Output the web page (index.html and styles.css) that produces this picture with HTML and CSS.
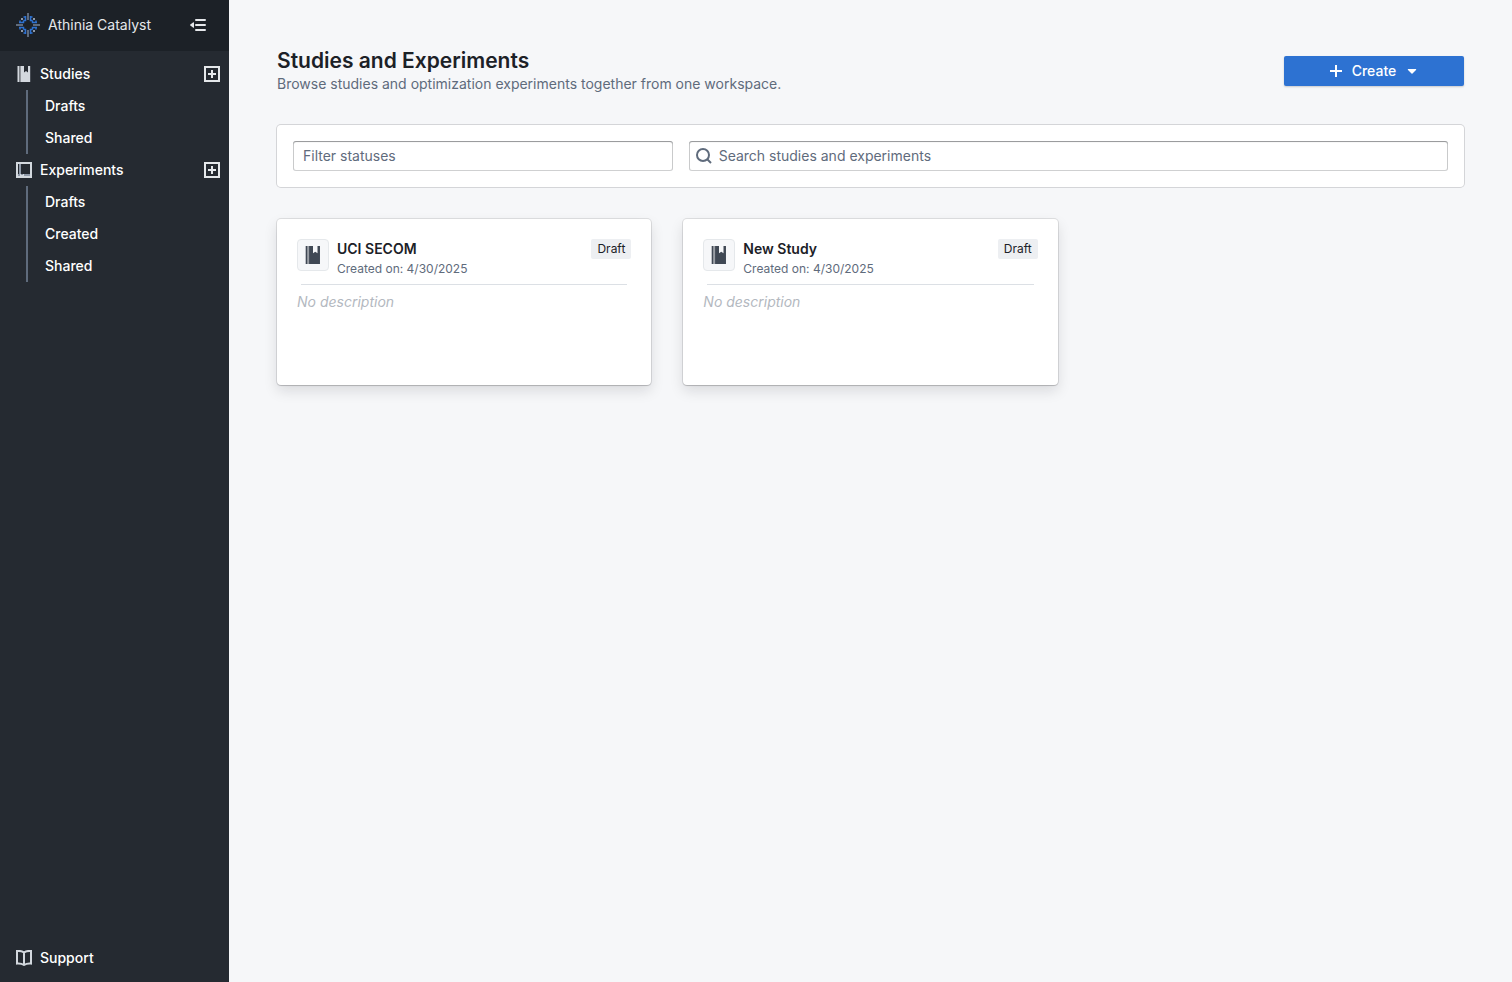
FILE: index.html
```
<!DOCTYPE html>
<html lang="en">
<head>
    <meta charset="UTF-8">
    <meta name="viewport" content="width=device-width, initial-scale=1.0">
    <title>Athinia Catalyst</title>
    <link rel="stylesheet" href="styles.css">
</head>
<body>
    <!-- Shared icon shapes -->
    <svg class="sprite" aria-hidden="true">
        <symbol id="icon-study" viewBox="0 0 16 16">
            <path d="M1.500 0H3v16H1.500zM4.500 0H8v6.500L10 5l2 1.500V0h2.200v16H4.500z"/>
            <path d="M3 0h1.500v16H3z" opacity=".5"/>
        </symbol>
        <symbol id="icon-add" viewBox="0 0 16 16">
            <path fill-rule="evenodd" d="M0 0h16v16H0zM2 2v12h12V2zM7 4h2v3h3v2H9v3H7V9H4V7h3z"/>
        </symbol>
    </svg>

    <div class="app">
        <aside class="sidebar">
            <div class="sidebar-header">
                <svg class="logo" viewBox="-12 -12 24 24" aria-hidden="true">
                    <g id="logo-quarter">
                        <path class="logo-blue" d="M-2.500 -9V-4.500H-4.500M-9 -2.500H-4.500V-4.500M-8 -4.500V-2.500M-4.500 -8H-2.500"/>
                        <path class="logo-grey" d="M-7 -6h2"/>
                    </g>
                    <use href="#logo-quarter" transform="scale(-1 1)"/>
                    <use href="#logo-quarter" transform="scale(1 -1)"/>
                    <use href="#logo-quarter" transform="scale(-1 -1)"/>
                    <path class="logo-arm" d="M0 -12v7M0 12v-7M-12 0h7M12 0h-7"/>
                </svg>
                <span class="brand">Athinia Catalyst</span>
                <button type="button" class="icon-button collapse" aria-label="Collapse sidebar">
                    <svg class="icon" viewBox="0 0 16 16" aria-hidden="true"><path d="M6 2h9q1 0 1 1t-1 1H6Q5 4 5 3t1-1zM6 7h9q1 0 1 1t-1 1H6Q5 9 5 8t1-1zM6 12h9q1 0 1 1t-1 1H6q-1 0-1-1t1-1zM4 5.500v5q-.5.5-1 0L.3 8.500q-.5-.5 0-1L3 5.500q.5-.5 1 0z"/></svg>
                </button>
            </div>

            <nav class="nav">
                <div class="nav-row">
                    <a href="#" class="nav-link"><svg class="icon" aria-hidden="true"><use href="#icon-study"/></svg>Studies</a>
                    <button type="button" class="icon-button" aria-label="Add study"><svg class="icon" aria-hidden="true"><use href="#icon-add"/></svg></button>
                </div>
                <div class="nav-children">
                    <a href="#" class="nav-child">Drafts</a>
                    <a href="#" class="nav-child">Shared</a>
                </div>
                <div class="nav-row">
                    <a href="#" class="nav-link">
                        <svg class="icon" viewBox="0 0 16 16" aria-hidden="true">
                            <path fill-rule="evenodd" d="M0 0h16v16H0zM2 2v12h12V2z"/>
                            <path d="M3 2h2v10H3zM2 12h12v2H2z" class="icon-shade"/>
                            <path d="M4 12h1v1h2v-1h1v4H4z"/>
                        </svg>Experiments
                    </a>
                    <button type="button" class="icon-button" aria-label="Add experiment"><svg class="icon" aria-hidden="true"><use href="#icon-add"/></svg></button>
                </div>
                <div class="nav-children">
                    <a href="#" class="nav-child">Drafts</a>
                    <a href="#" class="nav-child">Created</a>
                    <a href="#" class="nav-child">Shared</a>
                </div>
            </nav>

            <div class="nav-row support">
                <a href="#" class="nav-link">
                    <svg class="icon icon-line" viewBox="0 0 16 16" aria-hidden="true"><path d="M8 2.500Q5 .5 1 1v12.500q4-.5 7 1.500 3-2 7-1.500V1Q11 .5 8 2.500V15"/></svg>Support
                </a>
            </div>
        </aside>

        <main class="main">
            <header class="page-header">
                <div>
                    <h1 class="title">Studies and Experiments</h1>
                    <p class="subtitle">Browse studies and optimization experiments together from one workspace.</p>
                </div>
                <button type="button" class="create">
                    <svg class="icon" viewBox="0 0 16 16" aria-hidden="true"><path d="M7 2h2v5h5v2H9v5H7V9H2V7h5z"/></svg>
                    Create
                    <svg class="icon" viewBox="0 0 16 16" aria-hidden="true"><path d="M4 6h8q.5.5 0 1L8.500 10.500q-.5.500-1 0L4 7q-.5-.5 0-1z"/></svg>
                </button>
            </header>

            <form class="filters">
                <input type="text" class="input" placeholder="Filter statuses" aria-label="Filter statuses">
                <div class="search">
                    <svg class="icon search-icon" viewBox="0 0 16 16" aria-hidden="true"><circle cx="7" cy="7" r="6"/><path d="M11.500 11.500L15 15"/></svg>
                    <input type="search" class="input" placeholder="Search studies and experiments" aria-label="Search studies and experiments">
                </div>
            </form>

            <section class="cards">
                <article class="card">
                    <div class="card-header">
                        <span class="card-icon"><svg aria-hidden="true"><use href="#icon-study"/></svg></span>
                        <div class="card-text">
                            <h2 class="card-title">UCI SECOM</h2>
                            <p class="card-date">Created on: 4/30/2025</p>
                        </div>
                        <span class="tag">Draft</span>
                    </div>
                    <hr class="divider">
                    <p class="description">No description</p>
                </article>
                <article class="card">
                    <div class="card-header">
                        <span class="card-icon"><svg aria-hidden="true"><use href="#icon-study"/></svg></span>
                        <div class="card-text">
                            <h2 class="card-title">New Study</h2>
                            <p class="card-date">Created on: 4/30/2025</p>
                        </div>
                        <span class="tag">Draft</span>
                    </div>
                    <hr class="divider">
                    <p class="description">No description</p>
                </article>
            </section>
        </main>
    </div>
</body>
</html>
```
FILE: styles.css
```
* { box-sizing: border-box; }
body { margin: 0; font-family: Inter, sans-serif; font-size: 14px; line-height: 18px; color: #1c2127; background: #f6f7f9; }
h1, h2, p { margin: 0; }
a { color: inherit; text-decoration: none; }
button, input { font: inherit; }

.sprite { position: absolute; width: 0; height: 0; }
.icon { width: 16px; height: 16px; flex: none; fill: currentColor; }
.icon-line { fill: none; stroke: currentColor; stroke-width: 2; }
.icon-shade { fill: #8f99a8; }
.icon-button { display: flex; padding: 0; border: 0; background: none; color: #e5e8eb; cursor: pointer; }

.app { display: flex; min-height: 100vh; }

/* Sidebar */
.sidebar { display: flex; flex-direction: column; width: 229px; flex: none; padding-bottom: 8px; background: #252a31; color: #fff; }
.sidebar-header { display: flex; align-items: center; gap: 8px; height: 51px; padding: 0 23px 0 16px; border-bottom: 1px solid #1c2127; background: #1c2127; color: #e5e8eb; }
.logo { width: 24px; height: 24px; fill: none; }
.logo-blue { stroke: #2d72d2; stroke-width: 1.5; }
.logo-grey { stroke: #8f99a8; stroke-width: 2; }
.logo-arm { stroke: #5f6b7c; stroke-width: 2; }
.collapse { margin-left: auto; }
.nav { padding-top: 7px; }
.nav-row { display: flex; align-items: center; justify-content: space-between; height: 32px; padding: 0 9px 0 16px; }
.nav-link { display: flex; align-items: center; gap: 8px; font-weight: 500; }
.nav-link .icon { color: #d3d8de; }
.nav-children { margin-left: 26px; border-left: 2px solid #5f6b7c; }
.nav-child { display: block; padding: 7px 17px; font-weight: 500; }
.support { margin-top: auto; }

/* Page header */
.main { flex: 1; min-width: 0; padding: 48px; }
.page-header { display: flex; align-items: center; justify-content: space-between; margin-bottom: 32px; }
.title { font-size: 21px; font-weight: 600; line-height: 25px; margin-bottom: 2px; }
.subtitle { color: #5f6b7c; }
.create { display: flex; align-items: center; justify-content: center; gap: 8px; width: 180px; height: 30px; padding: 0; border: 0; border-radius: 2px; background: #2d72d2; color: #fff; font-weight: 500; box-shadow: 0 1px 2px rgba(17, 20, 24, 0.2); cursor: pointer; }

/* Filters */
.filters { display: grid; grid-template-columns: 1fr 2fr; gap: 16px; margin-bottom: 32px; padding: 16px; border-radius: 4px; background: #fff; box-shadow: 0 0 0 1px rgba(17, 20, 24, 0.15); }
.input { display: block; width: 100%; height: 30px; padding: 0 10px 2px; border: 0; border-radius: 3px; background: #fff; color: #1c2127; box-shadow: inset 0 0 0 1px rgba(17, 20, 24, 0.2), inset 0 1px 1px rgba(17, 20, 24, 0.3); }
.input::placeholder { color: #5f6b7c; opacity: 1; }
.search { position: relative; }
.search .input { padding-left: 30px; }
.search-icon { position: absolute; top: 7px; left: 7px; fill: none; stroke: #5f6b7c; stroke-width: 2; }

/* Cards */
.cards { display: grid; grid-template-columns: repeat(3, 1fr); gap: 32px; }
.card { min-height: 166px; padding: 20px; border-radius: 4px; background: #fff; box-shadow: 0 0 0 1px rgba(17, 20, 24, 0.1), 0 1px 1px rgba(17, 20, 24, 0.15), 0 6px 14px rgba(17, 20, 24, 0.12); }
.card-header { display: flex; align-items: flex-start; gap: 8px; }
.card-icon { display: flex; padding: 6px; border: 1px solid #e5e8eb; border-radius: 4px; background: #f6f7f9; color: #404854; }
.card-icon svg { width: 18px; height: 18px; fill: currentColor; }
.card-text { flex: 1; }
.card-title { font-size: 14px; font-weight: 600; line-height: 20px; }
.card-date { font-size: 12px; line-height: 20px; color: #5f6b7c; }
.tag { padding: 2px 6px; border-radius: 2px; background: #edeff2; font-size: 12px; line-height: 16px; }
.divider { margin: 5px 4px 8px; border: 0; border-top: 1px solid #dce0e5; }
.description { color: #b3b8c0; font-style: italic; }
```
